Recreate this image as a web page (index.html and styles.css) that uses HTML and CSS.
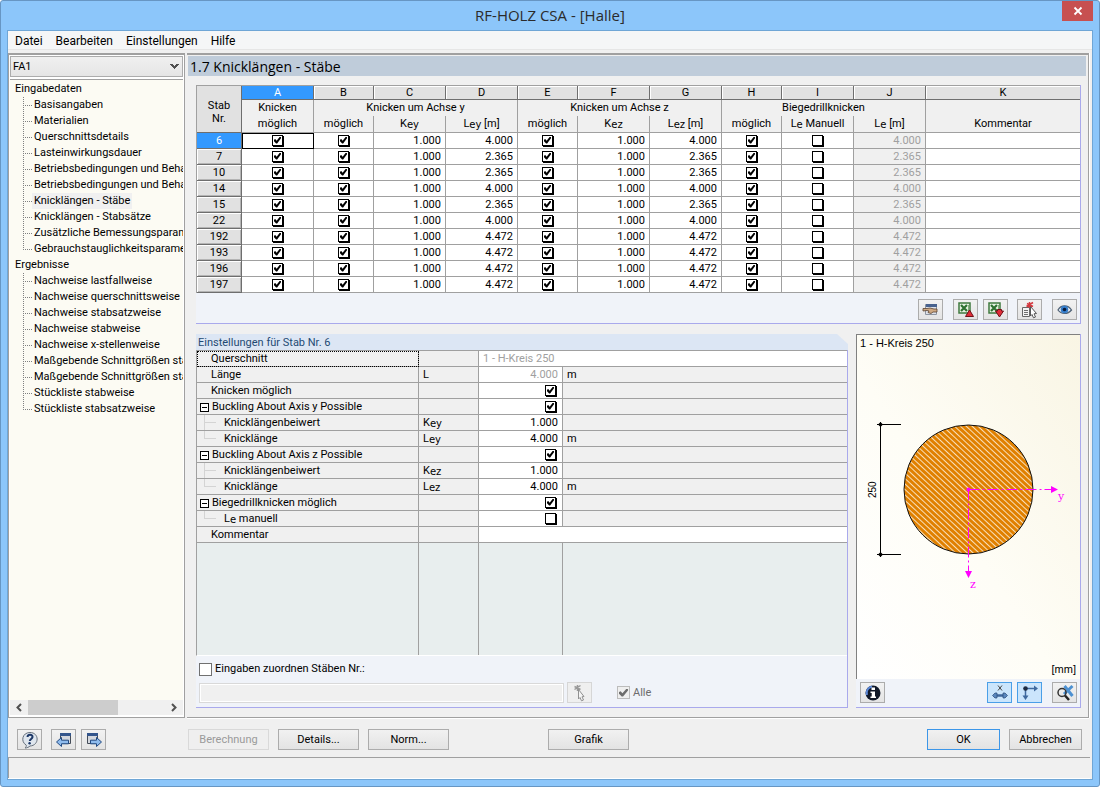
FILE: index.html
```html
<!DOCTYPE html>
<html lang="de">
<head>
<meta charset="utf-8">
<title>RF-HOLZ CSA - [Halle]</title>
<link rel="stylesheet" href="styles.css">
</head>
<body>
<div class="window">
  <header class="titlebar">
    <h1 class="title">RF-HOLZ CSA - [Halle]</h1>
    <button class="close" type="button" aria-label="Schließen"><svg width="10" height="10" viewBox="0 0 10 10"><path d="M1.5 1.5l7 7M8.500 1.500l-7 7" stroke="#fff" stroke-width="1.800"/></svg></button>
  </header>
  <div class="client">
    <nav class="menubar">
      <a href="#">Datei</a><a href="#">Bearbeiten</a><a href="#">Einstellungen</a><a href="#">Hilfe</a>
    </nav>
    <div class="main">
      <aside class="sidebar">
        <select class="case" aria-label="Bemessungsfall"><option>FA1</option></select>
        <nav class="tree">
          <a href="#">Eingabedaten</a>
          <ul>
            <li><a href="#">Basisangaben</a></li>
            <li><a href="#">Materialien</a></li>
            <li><a href="#">Querschnittsdetails</a></li>
            <li><a href="#">Lasteinwirkungsdauer</a></li>
            <li><a href="#">Betriebsbedingungen und Behandlung</a></li>
            <li><a href="#">Betriebsbedingungen und Behandlung</a></li>
            <li><a href="#" class="current">Knicklängen - Stäbe</a></li>
            <li><a href="#">Knicklängen - Stabsätze</a></li>
            <li><a href="#">Zusätzliche Bemessungsparameter</a></li>
            <li><a href="#">Gebrauchstauglichkeitsparameter</a></li>
          </ul>
          <a href="#">Ergebnisse</a>
          <ul>
            <li><a href="#">Nachweise lastfallweise</a></li>
            <li><a href="#">Nachweise querschnittsweise</a></li>
            <li><a href="#">Nachweise stabsatzweise</a></li>
            <li><a href="#">Nachweise stabweise</a></li>
            <li><a href="#">Nachweise x-stellenweise</a></li>
            <li><a href="#">Maßgebende Schnittgrößen stabweise</a></li>
            <li><a href="#">Maßgebende Schnittgrößen stabsatzweise</a></li>
            <li><a href="#">Stückliste stabweise</a></li>
            <li><a href="#">Stückliste stabsatzweise</a></li>
          </ul>
        </nav>
        <div class="scrollbar">
          <svg width="18" height="15" viewBox="0 0 18 15"><path d="M11 4L7.500 7.500 11 11" fill="none" stroke="#505050" stroke-width="2"/></svg>
          <span class="thumb"></span>
          <svg width="18" height="15" viewBox="0 0 18 15"><path d="M7 4l3.500 3.500L7 11" fill="none" stroke="#505050" stroke-width="2"/></svg>
        </div>
      </aside>
      <main class="content">
        <h2 class="heading">1.7 Knicklängen - Stäbe</h2>
        <div class="panels">
          <section class="box members">
            <table class="grid">
              <colgroup><col class="w45"><col class="w72"><col class="w60"><col class="w72"><col class="w72"><col class="w60"><col class="w72"><col class="w72"><col class="w60"><col class="w72"><col class="w72"><col></colgroup>
              <thead>
                <tr class="letters"><th rowspan="3" class="corner">Stab<br>Nr.</th><th class="sel">A</th><th>B</th><th>C</th><th>D</th><th>E</th><th>F</th><th>G</th><th>H</th><th>I</th><th>J</th><th>K</th></tr>
                <tr class="groups"><th>Knicken</th><th colspan="3">Knicken um Achse y</th><th colspan="3">Knicken um Achse z</th><th colspan="3">Biegedrillknicken</th><th></th></tr>
                <tr class="names"><th>möglich</th><th>möglich</th><th>K<sub>ey</sub></th><th>L<sub>ey</sub> [m]</th><th>möglich</th><th>K<sub>ez</sub></th><th>L<sub>ez</sub> [m]</th><th>möglich</th><th>L<sub>e</sub> Manuell</th><th>L<sub>e</sub> [m]</th><th>Kommentar</th></tr>
              </thead>
              <tbody>
                <tr><th class="sel">6</th><td class="c focus"><input type="checkbox" checked aria-label="6 Knicken möglich"></td><td class="c"><input type="checkbox" checked aria-label="6 Achse y möglich"></td><td>1.000</td><td>4.000</td><td class="c"><input type="checkbox" checked aria-label="6 Achse z möglich"></td><td>1.000</td><td>4.000</td><td class="c"><input type="checkbox" checked aria-label="6 Biegedrillknicken möglich"></td><td class="c"><input type="checkbox" aria-label="6 Le manuell"></td><td class="off">4.000</td><td></td></tr>
                <tr><th>7</th><td class="c"><input type="checkbox" checked aria-label="7 Knicken möglich"></td><td class="c"><input type="checkbox" checked aria-label="7 Achse y möglich"></td><td>1.000</td><td>2.365</td><td class="c"><input type="checkbox" checked aria-label="7 Achse z möglich"></td><td>1.000</td><td>2.365</td><td class="c"><input type="checkbox" checked aria-label="7 Biegedrillknicken möglich"></td><td class="c"><input type="checkbox" aria-label="7 Le manuell"></td><td class="off">2.365</td><td></td></tr>
                <tr><th>10</th><td class="c"><input type="checkbox" checked aria-label="10 Knicken möglich"></td><td class="c"><input type="checkbox" checked aria-label="10 Achse y möglich"></td><td>1.000</td><td>2.365</td><td class="c"><input type="checkbox" checked aria-label="10 Achse z möglich"></td><td>1.000</td><td>2.365</td><td class="c"><input type="checkbox" checked aria-label="10 Biegedrillknicken möglich"></td><td class="c"><input type="checkbox" aria-label="10 Le manuell"></td><td class="off">2.365</td><td></td></tr>
                <tr><th>14</th><td class="c"><input type="checkbox" checked aria-label="14 Knicken möglich"></td><td class="c"><input type="checkbox" checked aria-label="14 Achse y möglich"></td><td>1.000</td><td>4.000</td><td class="c"><input type="checkbox" checked aria-label="14 Achse z möglich"></td><td>1.000</td><td>4.000</td><td class="c"><input type="checkbox" checked aria-label="14 Biegedrillknicken möglich"></td><td class="c"><input type="checkbox" aria-label="14 Le manuell"></td><td class="off">4.000</td><td></td></tr>
                <tr><th>15</th><td class="c"><input type="checkbox" checked aria-label="15 Knicken möglich"></td><td class="c"><input type="checkbox" checked aria-label="15 Achse y möglich"></td><td>1.000</td><td>2.365</td><td class="c"><input type="checkbox" checked aria-label="15 Achse z möglich"></td><td>1.000</td><td>2.365</td><td class="c"><input type="checkbox" checked aria-label="15 Biegedrillknicken möglich"></td><td class="c"><input type="checkbox" aria-label="15 Le manuell"></td><td class="off">2.365</td><td></td></tr>
                <tr><th>22</th><td class="c"><input type="checkbox" checked aria-label="22 Knicken möglich"></td><td class="c"><input type="checkbox" checked aria-label="22 Achse y möglich"></td><td>1.000</td><td>4.000</td><td class="c"><input type="checkbox" checked aria-label="22 Achse z möglich"></td><td>1.000</td><td>4.000</td><td class="c"><input type="checkbox" checked aria-label="22 Biegedrillknicken möglich"></td><td class="c"><input type="checkbox" aria-label="22 Le manuell"></td><td class="off">4.000</td><td></td></tr>
                <tr><th>192</th><td class="c"><input type="checkbox" checked aria-label="192 Knicken möglich"></td><td class="c"><input type="checkbox" checked aria-label="192 Achse y möglich"></td><td>1.000</td><td>4.472</td><td class="c"><input type="checkbox" checked aria-label="192 Achse z möglich"></td><td>1.000</td><td>4.472</td><td class="c"><input type="checkbox" checked aria-label="192 Biegedrillknicken möglich"></td><td class="c"><input type="checkbox" aria-label="192 Le manuell"></td><td class="off">4.472</td><td></td></tr>
                <tr><th>193</th><td class="c"><input type="checkbox" checked aria-label="193 Knicken möglich"></td><td class="c"><input type="checkbox" checked aria-label="193 Achse y möglich"></td><td>1.000</td><td>4.472</td><td class="c"><input type="checkbox" checked aria-label="193 Achse z möglich"></td><td>1.000</td><td>4.472</td><td class="c"><input type="checkbox" checked aria-label="193 Biegedrillknicken möglich"></td><td class="c"><input type="checkbox" aria-label="193 Le manuell"></td><td class="off">4.472</td><td></td></tr>
                <tr><th>196</th><td class="c"><input type="checkbox" checked aria-label="196 Knicken möglich"></td><td class="c"><input type="checkbox" checked aria-label="196 Achse y möglich"></td><td>1.000</td><td>4.472</td><td class="c"><input type="checkbox" checked aria-label="196 Achse z möglich"></td><td>1.000</td><td>4.472</td><td class="c"><input type="checkbox" checked aria-label="196 Biegedrillknicken möglich"></td><td class="c"><input type="checkbox" aria-label="196 Le manuell"></td><td class="off">4.472</td><td></td></tr>
                <tr><th>197</th><td class="c"><input type="checkbox" checked aria-label="197 Knicken möglich"></td><td class="c"><input type="checkbox" checked aria-label="197 Achse y möglich"></td><td>1.000</td><td>4.472</td><td class="c"><input type="checkbox" checked aria-label="197 Achse z möglich"></td><td>1.000</td><td>4.472</td><td class="c"><input type="checkbox" checked aria-label="197 Biegedrillknicken möglich"></td><td class="c"><input type="checkbox" aria-label="197 Le manuell"></td><td class="off">4.472</td><td></td></tr>
              </tbody>
            </table>
            <div class="tools">
              <button class="tool" type="button" aria-label="Auswahl bearbeiten"><svg width="18" height="18" viewBox="0 0 18 18"><path fill="#dfe3ea" stroke="#8c94a0" d="M3.500 3.500h11v10h-11z"/><path fill="#48628e" d="M4 3h11v3H4z"/><path fill="#cfa982" stroke="#5a4330" stroke-width=".8" d="M1 7.500h4l3-.5 4 1h3v3h-4l-2 1.500-3-1 1-1.500-2-.5-4 .5z"/></svg></button>
              <button class="tool gap10" type="button" aria-label="Excel Export"><svg width="18" height="18" viewBox="0 0 18 18"><path fill="#e6f2e2" stroke="#3f7a3f" stroke-width="1.500" d="M2 2h11v10H2z"/><path stroke="#2d7130" stroke-width="2.200" d="M4 4l6 6M10 4l-6 6"/><path stroke="#7fae78" d="M11.500 4v6"/><path fill="#e02c38" stroke="#701018" d="M12.500 9l4 6.500h-8z"/></svg></button>
              <button class="tool gap5" type="button" aria-label="Excel Import"><svg width="18" height="18" viewBox="0 0 18 18"><path fill="#e6f2e2" stroke="#3f7a3f" stroke-width="1.500" d="M2 2h11v10H2z"/><path stroke="#2d7130" stroke-width="2.200" d="M4 4l6 6M10 4l-6 6"/><path stroke="#7fae78" d="M11.500 4v6"/><path fill="#e02c38" stroke="#701018" d="M8.500 10h2V8.500h4V10h2l-4 6z"/></svg></button>
              <button class="tool gap9" type="button" aria-label="Stab wählen"><svg width="18" height="18" viewBox="0 0 18 18"><path fill="#f4f4f4" stroke="#686868" d="M1.500 6.500h7v9h-7z"/><path stroke="#707070" d="M3 9.500h4M3 11.500h4M3 13.500h4"/><path stroke="#d43a40" stroke-width="1.500" d="M8.500 1v6M6 2.500l6 3M12 1.500L5.500 5.500"/><path fill="#fff" stroke="#555" d="M9.500 5.500l6 7-2.500.3 1.500 3.200-2 .8-1.500-3.300-1.500 1.500z"/></svg></button>
              <button class="tool gap10" type="button" aria-label="Ansicht"><svg width="18" height="18" viewBox="0 0 18 18"><path fill="#eef4fa" stroke="#526478" stroke-width="1.300" d="M2 9C5 3.500 12 3.500 15.500 9 12 13.500 5 13.500 2 9z"/><circle cx="8.500" cy="8.500" r="3.800" fill="#347dca"/><circle cx="8.500" cy="8.500" r="1.800" fill="#061838"/></svg></button>
            </div>
          </section>
          <div class="lower">
            <section class="settings">
              <h3 class="caption">Einstellungen für Stab Nr. 6</h3>
              <div class="box form">
                <table class="props">
                  <colgroup><col class="w222"><col class="w60"><col class="w84"><col></colgroup>
                  <tbody>
                    <tr><th class="marked">Querschnitt</th><td></td><td colspan="2" class="val text off">1 - H-Kreis 250</td></tr>
                    <tr><th>Länge</th><td>L</td><td class="val off">4.000</td><td>m</td></tr>
                    <tr><th>Knicken möglich</th><td></td><td class="val"><input type="checkbox" checked aria-label="Knicken möglich"></td><td></td></tr>
                    <tr><th class="node"><button class="fold" type="button" aria-label="Zuklappen"></button>Buckling About Axis y Possible</th><td></td><td class="val"><input type="checkbox" checked aria-label="Buckling About Axis y Possible"></td><td></td></tr>
                    <tr><th class="child">Knicklängenbeiwert</th><td>K<sub>ey</sub></td><td class="val">1.000</td><td></td></tr>
                    <tr><th class="child end">Knicklänge</th><td>L<sub>ey</sub></td><td class="val">4.000</td><td>m</td></tr>
                    <tr><th class="node"><button class="fold" type="button" aria-label="Zuklappen"></button>Buckling About Axis z Possible</th><td></td><td class="val"><input type="checkbox" checked aria-label="Buckling About Axis z Possible"></td><td></td></tr>
                    <tr><th class="child">Knicklängenbeiwert</th><td>K<sub>ez</sub></td><td class="val">1.000</td><td></td></tr>
                    <tr><th class="child end">Knicklänge</th><td>L<sub>ez</sub></td><td class="val">4.000</td><td>m</td></tr>
                    <tr><th class="node"><button class="fold" type="button" aria-label="Zuklappen"></button>Biegedrillknicken möglich</th><td></td><td class="val"><input type="checkbox" checked aria-label="Biegedrillknicken möglich"></td><td></td></tr>
                    <tr><th class="child end">L<sub>e</sub> manuell</th><td></td><td class="val"><input type="checkbox" aria-label="Le manuell"></td><td></td></tr>
                    <tr><th>Kommentar</th><td></td><td colspan="2" class="val text"></td></tr>
                  </tbody>
                </table>
                <div class="filler"><span></span><span></span><span></span><span></span></div>
                <div class="assign">
                  <label class="check"><input type="checkbox" class="plain">Eingaben zuordnen Stäben Nr.:</label>
                  <div class="assign-row">
                    <input type="text" class="members-input" disabled aria-label="Stäbe Nr.">
                    <button class="tool" type="button" disabled aria-label="Stäbe wählen"><svg width="18" height="18" viewBox="0 0 18 18"><path stroke="#999" stroke-width="1.500" d="M6.500 1v6M3.500 2.500l6 3M9.500 1.500l-6 4"/><path fill="#f4f4f4" stroke="#909090" d="M7.500 5.500l5.500 7-2 .3 1.500 3.200-2 .8-1.500-3.300-1.500 1.500z"/></svg></button>
                    <label class="check all"><input type="checkbox" class="plain" checked disabled>Alle</label>
                  </div>
                </div>
              </div>
            </section>
            <section class="box preview">
              <div class="stage">
                <p>1 - H-Kreis 250</p>
                <svg class="drawing" viewBox="0 0 223 310" preserveAspectRatio="xMinYMin slice" role="img" aria-label="Querschnitt">
                  <defs><pattern id="hatch" width="4" height="4" patternUnits="userSpaceOnUse" patternTransform="rotate(43)"><rect width="4" height="4" fill="#e08000"/><rect width="4" height="1" fill="#f8dfba"/></pattern></defs>
                  <circle cx="111.500" cy="138.500" r="64.500" fill="url(#hatch)" stroke="#111"/>
                  <path d="M23.500 71v135M20 73.500h24M20 203.500h24" stroke="#000" fill="none"/>
                  <path d="M21 73.500l2.500-2.500 2.500 2.500-2.500 2.500zM21 203.500l2.500-2.500 2.500 2.500-2.500 2.500z"/>
                  <text class="dim" x="0" y="0" transform="translate(19 147) rotate(-90)">250</text>
                  <path d="M111.500 138.500h83" stroke="#f0f" stroke-dasharray="11 3 2 3"/>
                  <path d="M111.500 138.500v82" stroke="#f0f" stroke-dasharray="11 3 2 3"/>
                  <path fill="#f0f" d="M194 135l7 3.500-7 3.500zM108 220h7l-3.500 7z"/><circle cx="111.500" cy="138.500" r="2" fill="#f0f"/>
                  <text class="axis" x="201" y="149">y</text><text class="axis" x="113" y="237">z</text>
                </svg>
                <p class="unit">[mm]</p>
              </div>
              <div class="tools">
                <button class="tool" type="button" aria-label="Info"><svg width="18" height="18" viewBox="0 0 18 18"><circle cx="9" cy="9" r="7.500" fill="#101828"/><path d="M3 11a6.500 6.500 0 0 1 5-8.500" stroke="#5c88d8" stroke-width="2" fill="none"/><path fill="#fff" d="M7.500 3.500h3.500v2.500H7.500zM6.500 7.500H11v5h1V14H6.500v-1.500h1.200V9H6.500z"/></svg></button>
                <button class="tool push on" type="button" aria-label="Bemaßung"><svg width="18" height="18" viewBox="0 0 18 18"><path d="M7 1.500l4 5M11 1.500l-4 5" stroke="#444"/><path stroke="#41689e" stroke-width="2.500" d="M4 11.500h10"/><path fill="#5a87be" stroke="#274878" stroke-width=".7" d="M1.500 11.500l2.500-2.500h2v5H4zM16.500 11.500L14 9h-2v5h2z"/></svg></button>
                <button class="tool gap5 on" type="button" aria-label="Achsen"><svg width="18" height="18" viewBox="0 0 18 18"><path stroke="#3f699e" stroke-width="1.500" fill="none" d="M4.500 13V4.500H14"/><path fill="#3f699e" d="M13 1.500l4 3-4 3zM1.500 11.500h6l-3 4.500z"/><circle cx="4.500" cy="4.500" r="2.300" fill="#1c2940"/></svg></button>
                <button class="tool gap10" type="button" aria-label="Ansicht zurücksetzen"><svg width="18" height="18" viewBox="0 0 18 18"><path stroke="#4d91d2" stroke-width="3" d="M8.500 2l8 10M16.500 2L8 10"/><circle cx="6" cy="8.500" r="4" fill="none" stroke="#333" stroke-width="1.500"/><path stroke="#222" stroke-width="2.500" d="M9 11.500l4 4.500"/></svg></button>
              </div>
            </section>
          </div>
        </div>
      </main>
    </div>
    <footer class="actions">
      <button class="tool" type="button" aria-label="Hilfe"><svg width="18" height="18" viewBox="0 0 18 18"><path fill="#dfe6ee" stroke="#66707c" d="M9 1.500c9.500 0 9.500 13 0 13.500-1 1-3 2-5 2 1.200-1 1.500-2 1.200-3C-.5 11 1 1.500 9 1.500z"/><path fill="none" stroke="#1d3868" stroke-width="2" d="M6.500 6C6.800 3 12 3.300 11.500 6 11.200 8 9 8 8.800 10"/><circle cx="8.600" cy="12.200" r="1.200" fill="#1d3868"/></svg></button>
      <button class="tool gap9" type="button" aria-label="Zurück"><svg width="18" height="18" viewBox="0 0 18 18"><path fill="#d3d7de" stroke="#444c58" d="M5.500 2.500h10v10h-10z"/><path fill="#33558c" d="M5 2h11v3H5z"/><path fill="#8fbcee" stroke="#234a82" d="M1.500 11l5-4.500v2.700h7v3.600h-7v2.700z"/></svg></button>
      <button class="tool gap5" type="button" aria-label="Weiter"><svg width="18" height="18" viewBox="0 0 18 18"><path fill="#d3d7de" stroke="#444c58" d="M2.500 2.500h10v10h-10z"/><path fill="#33558c" d="M2 2h11v3H2z"/><path fill="#8fbcee" stroke="#234a82" d="M16.500 11l-5-4.500v2.700h-6v3.600h6v2.700z"/></svg></button>
      <div class="group calc"><button class="btn" type="button" disabled>Berechnung</button><button class="btn" type="button">Details...</button><button class="btn" type="button">Norm...</button></div>
      <div class="group graph"><button class="btn" type="button">Grafik</button></div>
      <div class="group finish"><button class="btn default" type="button">OK</button><button class="btn" type="button">Abbrechen</button></div>
    </footer>
    <div class="statusbar"></div>
  </div>
</div>
</body>
</html>
```
FILE: styles.css
```css
* { box-sizing: border-box; }

body {
  margin: 0;
  background: #fff;
  color: #000;
  font: 11px/16px Roboto, "Liberation Sans", sans-serif;
}
h1, h2, h3, p, ul { margin: 0; padding: 0; font-weight: normal; }
ul { list-style: none; }
a { color: inherit; text-decoration: none; }
button, select, input { margin: 0; padding: 0; font: inherit; color: inherit; }
svg { display: block; }

.window {
  display: flex;
  flex-direction: column;
  min-height: 100vh;
  padding: 0 6px 6px;
  background: #8cc6fa;
  border: 1px solid #6796c3;
  border-radius: 3px;
}
.titlebar {
  display: grid;
  grid-template-columns: 1fr auto 1fr;
  height: 29px;
}
.title {
  grid-column: 2;
  font: 15px/29px "Open Sans", "Noto Sans", sans-serif;
  color: #2b2b2b;
}
.close {
  display: grid;
  place-items: center;
  justify-self: end;
  width: 31px;
  height: 20px;
  background: #c75050;
  border: 0;
}
.client {
  display: flex;
  flex: 1;
  flex-direction: column;
  min-height: 0;
  background: #f0f0f0;
  border: 1px solid #6fa6d6;
}
.menubar {
  display: flex;
  gap: 13px;
  height: 19px;
  padding: 0 7px;
  background: #f5f6f7;
  border-bottom: 1px solid #e6e6e6;
  font-size: 12px;
  line-height: 20px;
}
.main {
  display: flex;
  flex: 1;
  gap: 2px;
  min-height: 0;
  margin-top: 3px;
  padding-right: 3px;
}

/* navigation */
.sidebar {
  display: flex;
  flex: none;
  flex-direction: column;
  width: 177px;
  padding: 1px;
  background: #fff;
  border: 1px solid #a0a0a0;
  border-width: 2px 1px 1px 1px;
}
.case {
  appearance: none;
  height: 21px;
  margin-bottom: 2px;
  padding: 0 2px;
  border: 1px solid #acacac;
  border-radius: 0;
  background:
    linear-gradient(45deg, transparent 45%, #505050 45% 75%, transparent 75%) right 7px center / 5px 5px no-repeat,
    linear-gradient(-45deg, transparent 45%, #505050 45% 75%, transparent 75%) right 3px center / 5px 5px no-repeat,
    linear-gradient(#f0f0f0, #e5e5e5);
}
.tree {
  flex: 1;
  overflow: hidden;
  padding: 1px 0 0 5px;
  background: #fcfbf3;
  border-top: 1px solid #a0a0a0;
  white-space: nowrap;
}
.tree > a { display: block; }
.tree li {
  height: 16px;
  padding-left: 17px;
  background:
    repeating-linear-gradient(#808080 0 1px, transparent 1px 2px) 8px 0 / 1px 100% no-repeat,
    repeating-linear-gradient(90deg, #808080 0 1px, transparent 1px 2px) 10px 8px / 8px 1px no-repeat;
}
.tree li:last-child {
  background:
    repeating-linear-gradient(#808080 0 1px, transparent 1px 2px) 8px 0 / 1px 9px no-repeat,
    repeating-linear-gradient(90deg, #808080 0 1px, transparent 1px 2px) 10px 8px / 8px 1px no-repeat;
}
.tree li a { display: inline-block; padding: 0 2px; }
.tree .current { background: #f0f0f0; }
.scrollbar {
  display: flex;
  justify-content: space-between;
  height: 15px;
  margin-bottom: 1px;
  background: #f0f0f0;
}
.thumb { width: 90px; margin-right: auto; background: #cdcdcd; }

/* work area */
.content {
  display: flex;
  flex: 1;
  flex-direction: column;
  min-width: 0;
  padding: 1px 2px 9px 1px;
  border: 1px solid #a0a0a0;
  border-width: 2px 1px 1px 0;
  box-shadow: 0 1px #fff, 1px 0 #fff;
}
.heading {
  height: 20px;
  padding-left: 2px;
  background: #bfccda;
  font: 14px/21px "Open Sans", "Noto Sans", sans-serif;
}
.panels {
  display: flex;
  flex: 1;
  flex-direction: column;
  gap: 10px;
  padding: 9px 5px 0 8px;
}
.box {
  background: #f0f3f9;
  border: 1px solid #a9a9ec;
  border-width: 0 1px 1px 0;
}
sub { font: 10px/10px "DejaVu Sans", sans-serif; vertical-align: -1px; }

table { width: 100%; table-layout: fixed; border-spacing: 0; border-left: 1px solid #a0a0a0; }
.w45 { width: 45px; }
.w60 { width: 60px; }
.w72 { width: 72px; }
.w84 { width: 84px; }
.w222 { width: 222px; }
th, td {
  height: 16px;
  padding: 0;
  overflow: hidden;
  font-weight: normal;
  line-height: 15px;
  white-space: nowrap;
  border: 0 solid #a0a0a0;
  border-width: 0 1px 1px 0;
}
.grid { border-top: 1px solid #a0a0a0; }
.grid th { background: #f0f0f0; text-align: center; }
.grid td { padding-right: 4px; background: #fff; text-align: right; }
.grid .c { padding: 0; text-align: center; }
.grid .off { background: #f0f0f0; }
.grid .corner, .grid tbody th, .grid .letters th { background: #e1e1e1; }
.grid .letters th { height: 14px; line-height: 13px; border-color: #6e6e6e; box-shadow: inset 1px 1px #fff; }
.grid .letters .corner { padding-top: 6px; line-height: 13px; box-shadow: none; }
.grid tbody th { border-color: #6e6e6e; box-shadow: inset 1px 1px #fff, inset -1px -1px #b4b4b4; line-height: 14px; }
.grid .groups th { border-bottom: 0; vertical-align: top; }
.grid .names th { height: 17px; vertical-align: top; }
.grid .letters .sel, .grid tbody .sel { background: #39f; color: #fff; box-shadow: none; }
.grid th:last-child, .grid td:last-child { border-right: 0; }
.grid .corner:first-child { border-right: 1px solid #6e6e6e; }
.grid .focus { outline: 1px solid #000; outline-offset: -1px; }
.off { color: #a0a0a0; }

input[type="checkbox"] {
  appearance: none;
  display: inline-grid;
  place-items: center;
  width: 11px;
  height: 11px;
  margin-bottom: 2px;
  vertical-align: middle;
  background: #fff;
  border: 1px solid #000;
  box-shadow: 1px 1px #000;
}
input[type="checkbox"]:checked::before {
  content: "";
  width: 7px;
  height: 7px;
  background: #000;
  clip-path: polygon(0 45%, 18% 35%, 38% 60%, 85% 0, 100% 8%, 100% 25%, 45% 100%, 30% 100%, 0 65%);
}

.tools {
  display: flex;
  padding: 6px 3px 3px;
}
.members .tools { justify-content: flex-end; }
.tool {
  display: grid;
  place-items: center;
  flex: none;
  width: 25px;
  height: 21px;
  background: linear-gradient(#f2f2f2, #e4e4e4);
  border: 1px solid #acacac;
}
.tool.on { background: #cbe5fc; border-color: #4a9fe8; }
.tool:disabled { background: #efefef; border-color: #d6d6d6; }
.gap5 { margin-left: 5px; }
.gap9 { margin-left: 9px; }
.gap10 { margin-left: 10px; }
.push { margin-left: auto; }

.lower { display: flex; flex: 1; gap: 8px; }
.settings { display: flex; flex: 1; flex-direction: column; min-width: 0; }
.caption {
  height: 16px;
  padding-left: 2px;
  background: #dce6f4;
  color: #1f4a73;
  font-size: 11px;
  line-height: 17px;
  clip-path: polygon(0 0, calc(100% - 11px) 0, 100% 10px, 100% 100%, 0 100%);
}
.form { display: flex; flex: 1; flex-direction: column; }
.props { border-top: 1px solid #a0a0a0; }
.props th { padding-left: 14px; text-align: left; }
.props th, .props td { background: #f0f0f0; }
.props td { padding-left: 4px; }
.props td:last-child { border-right: 0; }
.props .val { padding: 0 4px; background: #fff; text-align: right; }
.props input[type="checkbox"] { margin-right: 2px; }
.props .val.text { text-align: left; }
.props .marked { outline: 1px dotted #000; outline-offset: -1px; }
.props .node { padding-left: 3px; }
.fold {
  width: 9px;
  height: 9px;
  margin-right: 3px;
  border: 1px solid #000;
  background: linear-gradient(#000, #000) center / 5px 1px no-repeat #fff;
  vertical-align: -1px;
}
.props .child {
  padding-left: 27px;
  background:
    linear-gradient(#d4d4d4, #d4d4d4) 7px 0 / 1px 100% no-repeat,
    linear-gradient(#d4d4d4, #d4d4d4) 7px 7px / 12px 1px no-repeat,
    #f0f0f0;
}
.props .child.end {
  background:
    linear-gradient(#d4d4d4, #d4d4d4) 7px 0 / 1px 8px no-repeat,
    linear-gradient(#d4d4d4, #d4d4d4) 7px 7px / 12px 1px no-repeat,
    #f0f0f0;
}
.filler {
  display: grid;
  flex: 1;
  grid-template-columns: 222px 60px 84px 1fr;
  background: #e8eeee;
  border-left: 1px solid #a0a0a0;
  border-bottom: 1px solid #fff;
}
.filler span { border-right: 1px solid #a0a0a0; }
.filler span:last-child { border-right: 0; }
.assign { padding: 5px 3px 4px; }
.check { display: flex; align-items: center; gap: 3px; width: max-content; }
input[type="checkbox"].plain { width: 13px; height: 13px; margin: 0; border-color: #707070; box-shadow: none; }
input[type="checkbox"].plain:disabled { background: #efefef; border-color: #bcbcbc; }
input[type="checkbox"].plain:disabled::before { width: 9px; height: 8px; background: #6d6d6d; }
.assign-row { display: flex; align-items: center; gap: 3px; margin-top: 5px; }
.members-input {
  width: 365px;
  height: 20px;
  background: #f0f0f0;
  border: 1px solid #d9d9d9;
  box-shadow: inset 0 0 0 1px #fff;
}
.all { margin-left: 22px; color: #6d6d6d; }

.preview { display: flex; flex: none; flex-direction: column; width: 225px; }
.stage {
  display: flex;
  flex: 1;
  flex-direction: column;
  padding: 0 4px 0 3px;
  background: linear-gradient(to left bottom, #f9f5e4, #fefdf6 55%, #fff);
  border: 1px solid #808080;
  border-width: 1px 0 0 1px;
  font: 11px/16px "Liberation Sans", Arial, sans-serif;
}
.stage p { height: 16px; }
.stage .unit { height: 18px; align-self: flex-end; }
.drawing { flex: 1; min-height: 0; margin: 0 -4px 0 -3px; }
.dim { font: 10px "Liberation Sans", Arial, sans-serif; }
.axis { font: 11px "DejaVu Serif", serif; fill: #f0f; }
.preview .tools { padding: 3px 3px 4px 4px; }

/* dialog buttons */
.actions { display: flex; padding: 11px 10px 7px 9px; }
.group { display: flex; gap: 9px; }
.calc { margin-left: 82px; }
.graph { margin-left: 99px; }
.finish { margin-left: auto; }
.btn {
  width: 81px;
  height: 21px;
  background: linear-gradient(#f1f1f1, #e3e3e3);
  border: 1px solid #acacac;
}
.finish .btn { width: 73px; }
.btn:disabled { background: #efefef; border-color: #d9d9d9; color: #9a9a9a; }
.btn.default { border-color: #3c96e8; }
.statusbar {
  height: 21px;
  margin: 0 2px 1px 0;
  border: 1px solid #a0a0a0;
  border-width: 1px 0 0 1px;
  box-shadow: 0 1px #fff;
}
```
